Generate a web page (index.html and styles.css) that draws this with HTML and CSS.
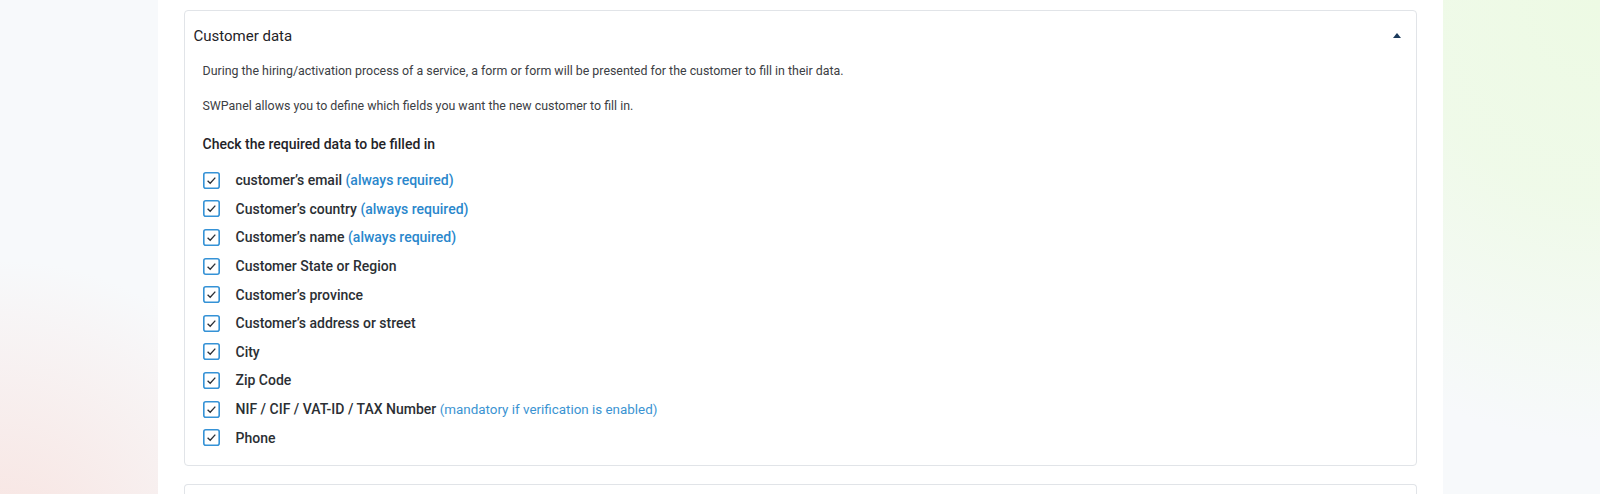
FILE: index.html
```html
<!DOCTYPE html>
<html lang="en">
<head>
<meta charset="utf-8">
<title>Customer data</title>
<link rel="stylesheet" href="styles.css">
</head>
<body>
<div class="page">
  <main class="content">
    <section class="card">
      <header class="card-head">
        <h2 class="card-title">Customer data</h2>
        <span class="caret"></span>
      </header>
      <div class="card-body">
        <p class="desc">During the hiring/activation process of a service, a form or form will be presented for the customer to fill in their data.</p>
        <p class="desc desc-2">SWPanel allows you to define which fields you want the new customer to fill in.</p>
        <h3 class="subtitle">Check the required data to be filled in</h3>
        <ul class="checks">
          <li class="check-row"><span class="box"><svg viewBox="0 0 17 17" width="17" height="17"><rect x="0.8" y="0.8" width="15.4" height="15.4" rx="2" fill="#fff" stroke="#3592d6" stroke-width="1.6"/><path d="M4.6 8.8 L7.2 11.3 L12.3 5.6" fill="none" stroke="#2b2f36" stroke-width="1.3"/></svg></span><span class="lbl">customer’s email <span class="req">(always required)</span></span></li>
          <li class="check-row"><span class="box"><svg viewBox="0 0 17 17" width="17" height="17"><rect x="0.8" y="0.8" width="15.4" height="15.4" rx="2" fill="#fff" stroke="#3592d6" stroke-width="1.6"/><path d="M4.6 8.8 L7.2 11.3 L12.3 5.6" fill="none" stroke="#2b2f36" stroke-width="1.3"/></svg></span><span class="lbl">Customer’s country <span class="req">(always required)</span></span></li>
          <li class="check-row"><span class="box"><svg viewBox="0 0 17 17" width="17" height="17"><rect x="0.8" y="0.8" width="15.4" height="15.4" rx="2" fill="#fff" stroke="#3592d6" stroke-width="1.6"/><path d="M4.6 8.8 L7.2 11.3 L12.3 5.6" fill="none" stroke="#2b2f36" stroke-width="1.3"/></svg></span><span class="lbl">Customer’s name <span class="req">(always required)</span></span></li>
          <li class="check-row"><span class="box"><svg viewBox="0 0 17 17" width="17" height="17"><rect x="0.8" y="0.8" width="15.4" height="15.4" rx="2" fill="#fff" stroke="#3592d6" stroke-width="1.6"/><path d="M4.6 8.8 L7.2 11.3 L12.3 5.6" fill="none" stroke="#2b2f36" stroke-width="1.3"/></svg></span><span class="lbl">Customer State or Region</span></li>
          <li class="check-row"><span class="box"><svg viewBox="0 0 17 17" width="17" height="17"><rect x="0.8" y="0.8" width="15.4" height="15.4" rx="2" fill="#fff" stroke="#3592d6" stroke-width="1.6"/><path d="M4.6 8.8 L7.2 11.3 L12.3 5.6" fill="none" stroke="#2b2f36" stroke-width="1.3"/></svg></span><span class="lbl">Customer’s province</span></li>
          <li class="check-row"><span class="box"><svg viewBox="0 0 17 17" width="17" height="17"><rect x="0.8" y="0.8" width="15.4" height="15.4" rx="2" fill="#fff" stroke="#3592d6" stroke-width="1.6"/><path d="M4.6 8.8 L7.2 11.3 L12.3 5.6" fill="none" stroke="#2b2f36" stroke-width="1.3"/></svg></span><span class="lbl">Customer’s address or street</span></li>
          <li class="check-row"><span class="box"><svg viewBox="0 0 17 17" width="17" height="17"><rect x="0.8" y="0.8" width="15.4" height="15.4" rx="2" fill="#fff" stroke="#3592d6" stroke-width="1.6"/><path d="M4.6 8.8 L7.2 11.3 L12.3 5.6" fill="none" stroke="#2b2f36" stroke-width="1.3"/></svg></span><span class="lbl">City</span></li>
          <li class="check-row"><span class="box"><svg viewBox="0 0 17 17" width="17" height="17"><rect x="0.8" y="0.8" width="15.4" height="15.4" rx="2" fill="#fff" stroke="#3592d6" stroke-width="1.6"/><path d="M4.6 8.8 L7.2 11.3 L12.3 5.6" fill="none" stroke="#2b2f36" stroke-width="1.3"/></svg></span><span class="lbl">Zip Code</span></li>
          <li class="check-row"><span class="box"><svg viewBox="0 0 17 17" width="17" height="17"><rect x="0.8" y="0.8" width="15.4" height="15.4" rx="2" fill="#fff" stroke="#3592d6" stroke-width="1.6"/><path d="M4.6 8.8 L7.2 11.3 L12.3 5.6" fill="none" stroke="#2b2f36" stroke-width="1.3"/></svg></span><span class="lbl">NIF / CIF / VAT-ID / TAX Number <span class="req req-light">(mandatory if verification is enabled)</span></span></li>
          <li class="check-row"><span class="box"><svg viewBox="0 0 17 17" width="17" height="17"><rect x="0.8" y="0.8" width="15.4" height="15.4" rx="2" fill="#fff" stroke="#3592d6" stroke-width="1.6"/><path d="M4.6 8.8 L7.2 11.3 L12.3 5.6" fill="none" stroke="#2b2f36" stroke-width="1.3"/></svg></span><span class="lbl">Phone</span></li>
        </ul>
      </div>
    </section>
    <section class="card card-next"></section>
  </main>
</div>
</body>
</html>
```

FILE: styles.css
```css
html, body {
  margin: 0;
  padding: 0;
  height: 100%;
}

body {
  font-family: Roboto, "Liberation Sans", Arial, sans-serif;
  color: #222;
  overflow: hidden;
  background-color: #f7f9fb;
  background-image:
    radial-gradient(ellipse 300px 300px at 0px 560px, rgba(248, 224, 220, 0.9), rgba(248, 224, 220, 0) 100%),
    radial-gradient(ellipse 420px 440px at 1600px 0px, rgba(237, 250, 228, 1) 0%, rgba(237, 250, 228, 0.8) 45%, rgba(237, 250, 228, 0) 100%);
}

.page {
  height: 100%;
}

.content {
  width: 1285px;
  margin: 0 auto;
  height: 100%;
  background: #fff;
  padding: 10px 26px 0;
  box-sizing: border-box;
}

.card {
  border: 1px solid #e1e4e8;
  border-radius: 4px;
  background: #fff;
}

.card-head {
  height: 50px;
  padding: 0 15px 0 9px;
  display: flex;
  align-items: center;
  justify-content: space-between;
}

.card-title {
  margin: 0;
  font-size: 15px;
  font-weight: 400;
  color: #1f2328;
}

.caret {
  width: 0;
  height: 0;
  border-left: 4px solid transparent;
  border-right: 4px solid transparent;
  border-bottom: 5px solid #1b3a5c;
  margin-bottom: 2px;
}

.card-body {
  padding: 0 18px 13px 18px;
}

.desc {
  margin: 0;
  font-size: 12.4px;
  line-height: 20px;
  color: #3c4044;
}

.desc-2 {
  margin-top: 15px;
}

.subtitle {
  margin: 18px 0 0;
  font-size: 14px;
  line-height: 20px;
  font-weight: 500;
  color: #1f2328;
}

.checks {
  list-style: none;
  margin: 12px 0 0;
  padding: 0;
}

.check-row {
  height: 28.6px;
  display: flex;
  align-items: center;
}

.box {
  width: 17px;
  height: 17px;
  display: block;
  margin-right: 16px;
}

.box svg {
  display: block;
}

.lbl {
  font-size: 14px;
  font-weight: 500;
  color: #2b2f34;
}

.req {
  color: #2a87cc;
  font-weight: 500;
}

.req-light {
  font-size: 13.4px;
  font-weight: 400;
  color: #3a93d2;
}

.card-next {
  margin-top: 18px;
  height: 9px;
  border-bottom: 0;
  border-radius: 4px 4px 0 0;
}
```
